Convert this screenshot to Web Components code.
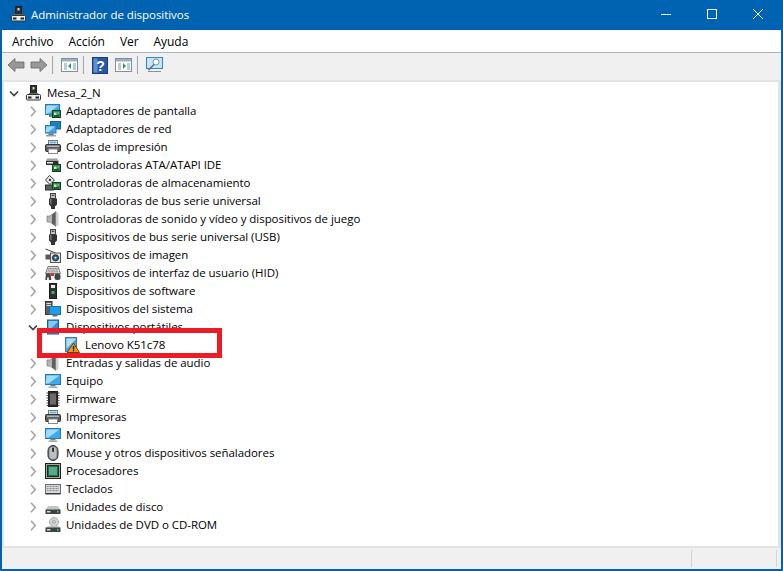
<!DOCTYPE html>
<html lang="es">
<head>
<meta charset="utf-8">
<title>Administrador de dispositivos</title>
<style>
  html, body { margin: 0; padding: 0; height: 100%; overflow: hidden; background: #fff; }
  body { font: 11.5px "Open Sans", "Noto Sans", sans-serif; letter-spacing: -0.05px; color: #000; }
</style>
</head>
<body>
<dm-window>
  <dm-titlebar slot="title" title-text="Administrador de dispositivos"></dm-titlebar>
  <dm-menubar slot="menu">
    <span>Archivo</span><span>Acción</span><span>Ver</span><span>Ayuda</span>
  </dm-menubar>
  <dm-toolbar slot="tools"></dm-toolbar>
  <dm-tree slot="tree">
    <dm-node level="0" open icon="root" label="Mesa_2_N"></dm-node>
    <dm-node icon="display" label="Adaptadores de pantalla"></dm-node>
    <dm-node icon="network" label="Adaptadores de red"></dm-node>
    <dm-node icon="printer" label="Colas de impresión"></dm-node>
    <dm-node icon="ata" label="Controladoras ATA/ATAPI IDE"></dm-node>
    <dm-node icon="storage" label="Controladoras de almacenamiento"></dm-node>
    <dm-node icon="usb" label="Controladoras de bus serie universal"></dm-node>
    <dm-node icon="sound" label="Controladoras de sonido y vídeo y dispositivos de juego"></dm-node>
    <dm-node icon="usb" label="Dispositivos de bus serie universal (USB)"></dm-node>
    <dm-node icon="camera" label="Dispositivos de imagen"></dm-node>
    <dm-node icon="hid" label="Dispositivos de interfaz de usuario (HID)"></dm-node>
    <dm-node icon="software" label="Dispositivos de software"></dm-node>
    <dm-node icon="system" label="Dispositivos del sistema"></dm-node>
    <dm-node open icon="portable" label="Dispositivos portátiles"></dm-node>
    <dm-node level="2" icon="warning" label="Lenovo K51c78"></dm-node>
    <dm-node icon="sound" label="Entradas y salidas de audio"></dm-node>
    <dm-node icon="monitor" label="Equipo"></dm-node>
    <dm-node icon="firmware" label="Firmware"></dm-node>
    <dm-node icon="printer" label="Impresoras"></dm-node>
    <dm-node icon="monitor" label="Monitores"></dm-node>
    <dm-node icon="mouse" label="Mouse y otros dispositivos señaladores"></dm-node>
    <dm-node icon="cpu" label="Procesadores"></dm-node>
    <dm-node icon="keyboard" label="Teclados"></dm-node>
    <dm-node icon="disk" label="Unidades de disco"></dm-node>
    <dm-node icon="dvd" label="Unidades de DVD o CD-ROM"></dm-node>
    <dm-highlight></dm-highlight>
  </dm-tree>
  <dm-statusbar slot="status"></dm-statusbar>
</dm-window>

<script>
const board = '<rect x="7.5" y="7.5" width="8" height="7" fill="#2f8a55" stroke="#123d26"/><path d="M9 9.500h2.500v2.500H9zM12.500 9.500H14v1h-1.500z" fill="#c7e8b8"/><path d="M9 13h5" stroke="#0f2f1d"/>'
const screen = (x, y, w, h) => `<rect x="${x}" y="${y}" width="${w}" height="${h}" fill="#3fa9ec" stroke="#2b76b0"/><path d="M${x + 1} ${y + 1}h${w - 2}l-${w - 4} ${h - 2}h-3z" fill="#9fdcfb"/>`

const ICONS = {
  root: '<rect x="4.500" y="0.500" width="6" height="8" fill="#2e2e2e" stroke="#222"/><rect x="6.500" y="2" width="2" height="2.500" fill="#d8d8d8"/><path d="M3 8h9l1 2H2z" fill="#666"/><rect x="0.500" y="9.500" width="14" height="5.500" rx="1" fill="#ececec" stroke="#333"/><rect x="2" y="11.500" width="3.500" height="2" fill="#222"/><rect x="9.500" y="11.500" width="3.500" height="2" fill="#222"/>',
  display: screen(0.5, 1.5, 14, 10) + '<rect x="4" y="12" width="5" height="2" fill="#7c7c7c"/>' + board,
  network: '<rect x="5.500" y="0.500" width="10" height="7.500" fill="#1f7fc4" stroke="#205f90"/>' + screen(0.5, 4.5, 10.5, 7.5) + '<rect x="3.500" y="12.500" width="5" height="1.500" fill="#6d6d6d"/><rect x="1" y="14" width="10" height="1.500" fill="#9d9d9d"/>',
  printer: '<rect x="3.500" y="1.500" width="9" height="4" fill="#fff" stroke="#777"/><rect x="4.500" y="2.500" width="7" height="2" fill="#63b0e2"/><rect x="0.500" y="5.500" width="15" height="7" rx="1" fill="#5d5d5d" stroke="#333"/><rect x="2" y="6.500" width="12" height="1.500" fill="#b3b3b3"/><rect x="3.500" y="10" width="9" height="4.500" fill="#fff" stroke="#888"/>',
  ata: '<path d="M2 1.500h10l2 3v3H1V4z" fill="#a0a0a0"/><rect x="1" y="4" width="12" height="4" fill="#2e2e2e"/><rect x="2" y="5" width="6" height="1.500" fill="#efefef"/>' + board,
  storage: '<path d="M4.500 0.500l5 4.500-4.500 4.500L0.500 5z" fill="#eee" stroke="#333"/><circle cx="5" cy="5" r="1.300" fill="#444"/><rect x="0.500" y="10" width="8" height="5" fill="#5d5d5d" stroke="#2e2e2e"/>' + board,
  usb: '<rect x="5.500" y="0.500" width="5" height="5" fill="#c4c4c4" stroke="#444"/><rect x="6.800" y="1.700" width="1" height="1.300" fill="#222"/><rect x="8.300" y="1.700" width="1" height="1.300" fill="#222"/><path d="M4 5.500h8v6l-2 2v2.500H6v-2.500l-2-2z" fill="#333"/><rect x="5.200" y="6" width="1.300" height="5" fill="#808080"/>',
  sound: '<path d="M2 5h3l6-4.500v15L5 11H2z" fill="#b5b5b5" stroke="#767676" stroke-width=".7"/><path d="M7 3.500v9l3.500 2.300V1.200z" fill="#5f5f5f"/><rect x="12" y="1.500" width="1.500" height="13" fill="#d2d2d2"/>',
  camera: '<path d="M0.500 2l10 4" stroke="#444" fill="none"/><rect x="0.500" y="7.500" width="6" height="5" fill="#5a5a5a"/><rect x="5.500" y="6" width="10" height="9.500" fill="#e2e2e2" stroke="#555"/><circle cx="10.500" cy="10.800" r="3" fill="#2f688f" stroke="#222"/><circle cx="10.500" cy="10.800" r="1" fill="#c6e9fa"/>',
  hid: '<path d="M3 1.500h10l2.500 7H.5z" fill="#dcdcdc" stroke="#5f5f5f" stroke-width=".8"/><path d="M3.500 3.500h9M3 5h10M2.500 6.800h11" stroke="#777" stroke-dasharray="1 .6"/><path d="M1 8.500h4.500l.8 6.500H4l-.5-3h-1L2 15H.3z" fill="#454545"/><rect x="6" y="8" width="3" height="3" fill="#cc2f2f"/><rect x="9.500" y="8.500" width="6" height="6.500" rx="2.500" fill="#454545"/>',
  software: '<rect x="4.500" y="0.500" width="7" height="15" fill="#2f2f2f" stroke="#1c1c1c"/><rect x="6" y="2" width="4" height="3" fill="#ececec"/><rect x="6.500" y="8" width="3" height="3" fill="#3cb46a"/>',
  system: '<rect x="0.500" y="0.500" width="6.500" height="13" fill="#5f5f5f" stroke="#333"/><rect x="1.500" y="2" width="4.500" height="1" fill="#e0e0e0"/><rect x="1.500" y="4" width="4.500" height="1" fill="#e0e0e0"/><rect x="4.500" y="5.500" width="11" height="8" fill="#1c9fe6" stroke="#1f6fa8"/><rect x="7.500" y="13.500" width="5" height="2" fill="#6f6f6f"/>',
  portable: '<rect x="2.500" y="1" width="11" height="14" fill="#2f8fdc" stroke="#1f5f94"/><path d="M3.500 2h9v1l-9 9z" fill="#84cbf3"/>',
  warning: '<rect x="1.500" y="0.500" width="11" height="14" fill="#4aa7e8" stroke="#4f7490"/><path d="M2.500 1.500h9v1l-9 9z" fill="#b5e0f9"/><path d="M9.500 6l6 9.500H3z" fill="#f09a1c" stroke="#6b3f0a" stroke-linejoin="round"/><rect x="8.900" y="9" width="1.300" height="3.500" fill="#111"/><rect x="8.900" y="13" width="1.300" height="1.300" fill="#111"/>',
  monitor: screen(0.5, 1.5, 15, 10) + '<rect x="5.500" y="12" width="5" height="1.500" fill="#7f7f7f"/><rect x="3.500" y="13.500" width="9" height="1.500" fill="#aaa"/>',
  firmware: '<rect x="3.500" y="0.500" width="9" height="15" fill="#2b2b2b" stroke="#1a1a1a"/><path d="M1.500 2h2M1.500 4.500h2M1.500 7h2M1.500 9.500h2M1.500 12h2M1.500 14.500h2M12.500 2h2M12.500 4.500h2M12.500 7h2M12.500 9.500h2M12.500 12h2M12.500 14.500h2" stroke="#555"/><rect x="5" y="2.500" width="6" height="11" fill="#6b6b6b"/>',
  mouse: '<rect x="3" y="0.500" width="10" height="15" rx="5" fill="#7e8388" stroke="#2c2c2c"/><rect x="4.500" y="2" width="7" height="12" rx="3.500" fill="#bcc0c4"/><rect x="7.200" y="2.500" width="1.700" height="4.500" rx=".8" fill="#1c1c1c"/>',
  cpu: '<rect x="0.500" y="0.500" width="15" height="15" fill="#b9a86f" stroke="#222"/><rect x="2.500" y="2.500" width="11" height="11" fill="#16705a" stroke="#102e3d"/><rect x="4" y="4" width="8" height="8" fill="#5aa888"/>',
  keyboard: '<rect x="0.500" y="3.500" width="15" height="9" fill="#d6d8da" stroke="#6d6d6d"/><path d="M2 5.500h12M2 7.500h12M2 9.500h12" stroke="#85888b" stroke-dasharray="1 .5"/><rect x="0.500" y="12" width="15" height="1.500" fill="#3b3b3b"/>',
  disk: '<path d="M3 7h10l2.500 4H.5z" fill="#c2c4c6"/><rect x="0.500" y="10.500" width="15" height="4.500" fill="#404144"/><rect x="2" y="12" width="3.500" height="1.500" fill="#dcdcdc"/><rect x="12" y="12" width="1.500" height="1.500" fill="#55d864"/>',
  dvd: '<circle cx="9" cy="5" r="4.500" fill="#d3d5d7" stroke="#8f8f8f" stroke-width=".7"/><circle cx="9" cy="5" r="1.300" fill="#fff" stroke="#777" stroke-width=".7"/><path d="M3 9h10l2.500 2H.5z" fill="#c2c4c6"/><rect x="0.500" y="10.500" width="15" height="4.500" fill="#404144"/><rect x="2" y="12" width="3.500" height="1.500" fill="#dcdcdc"/><rect x="12" y="12" width="1.500" height="1.500" fill="#55d864"/>'
}

class DmWindow extends HTMLElement {
  constructor () {
    super()
    this.attachShadow({ mode: 'open' }).innerHTML = `
      <style>
        :host {
          display: flex;
          flex-direction: column;
          box-sizing: border-box;
          width: 783px;
          height: 571px;
          border: solid #0063b1;
          border-width: 0 2px 2px 2px;
          background: #f0f0f0;
        }
        ::slotted([slot=tree]) { flex: 1; min-height: 0; }
      </style>
      <slot name="title"></slot>
      <slot name="menu"></slot>
      <slot name="tools"></slot>
      <slot name="tree"></slot>
      <slot name="status"></slot>`
  }
}

class DmTitlebar extends HTMLElement {
  constructor () {
    super()
    this.attachShadow({ mode: 'open' })
  }

  connectedCallback () {
    this.shadowRoot.innerHTML = `
      <style>
        :host {
          display: flex;
          align-items: center;
          height: 30px;
          margin: 0 -2px;
          padding-left: 11px;
          background: #0063b1;
          color: #fff;
          flex: none;
        }
        svg.app { width: 16px; height: 16px; margin: -2px 4px 0 0; flex: none; }
        .name { flex: 1; margin-top: -2px; }
        .btn { width: 46px; height: 28px; align-self: flex-start; display: flex; align-items: center; justify-content: center; }
        .btn svg { width: 12px; height: 12px; fill: none; stroke: #fff; stroke-width: 1; }
        .btn:last-child { margin-right: 2px; }
      </style>
      <svg class="app" viewBox="0 0 16 16">${ICONS.root}</svg>
      <span class="name">${this.getAttribute('title-text')}</span>
      <div class="btn"><svg viewBox="0 0 12 12"><path d="M1 6.500h10"/></svg></div>
      <div class="btn"><svg viewBox="0 0 12 12"><rect x="1.500" y="1.500" width="9" height="9"/></svg></div>
      <div class="btn"><svg viewBox="0 0 12 12"><path d="M1 1l10 10M11 1L1 11"/></svg></div>`
  }
}

class DmMenubar extends HTMLElement {
  constructor () {
    super()
    this.attachShadow({ mode: 'open' }).innerHTML = `
      <style>
        :host {
          display: flex;
          align-items: center;
          gap: 15px;
          height: 22px;
          padding-left: 10px;
          background: #fff;
          border-bottom: 1px solid #b4b4b4;
          font-size: 12px;
          flex: none;
        }
      </style>
      <slot></slot>`
  }
}

class DmToolbar extends HTMLElement {
  constructor () {
    super()
    const pane = (d) => `<svg viewBox="0 0 18 16"><rect x=".5" y="1.500" width="16" height="13" fill="#fff" stroke="#7f909c"/><rect x="1" y="2" width="15" height="2.500" fill="#9fb0bd"/><rect x="3" y="6" width="3" height="7" fill="#bfcbd3"/><rect x="12" y="6" width="3" height="7" fill="#bfcbd3"/><path d="${d}" fill="#2f9a58"/></svg>`
    this.attachShadow({ mode: 'open' }).innerHTML = `
      <style>
        :host {
          display: flex;
          align-items: center;
          box-sizing: border-box;
          height: 27px;
          padding: 0 0 3px 5px;
          background: #f0f0f0;
          flex: none;
        }
        svg { width: 18px; height: 16px; flex: none; }
        .sep { width: 1px; height: 18px; background: #a0a0a0; margin: 0 8px 0 4px; flex: none; }
      </style>
      <svg style="margin-right:5px" viewBox="0 0 18 16"><path d="M1 8l7-6.500v3.500h9v6H8v3.500z" fill="#989898" stroke="#666" stroke-width=".8"/></svg>
      <svg viewBox="0 0 18 16"><path d="M17 8l-7-6.500v3.500H1v6h9v3.500z" fill="#989898" stroke="#666" stroke-width=".8"/></svg>
      <div class="sep"></div>
      ${pane('M10 6v6L7 9z')}
      <div class="sep"></div>
      <svg style="width:16px;height:17px;margin-right:7px" viewBox="0 0 16 17"><rect x=".5" y="0.500" width="15" height="16" fill="#2758a8" stroke="#1b3f7c"/><rect x="1.500" y="1.500" width="4" height="14" fill="#5f8fd6"/><text x="8.500" y="14" font-size="14" font-weight="700" font-family="Liberation Sans" text-anchor="middle" fill="#fff">?</text></svg>
      ${pane('M8 6v6l3-3z')}
      <div class="sep"></div>
      <svg viewBox="0 0 18 16"><rect x=".5" y="0.500" width="16" height="11" fill="#c5e6f9" stroke="#2f87c0"/><circle cx="10" cy="5" r="3" fill="#fff" stroke="#7f909c"/><path d="M8 7.500L2.500 13" stroke="#666" stroke-width="1.500"/><path d="M2 14.500h13" stroke="#8f8f8f"/></svg>`
  }
}

class DmTree extends HTMLElement {
  constructor () {
    super()
    this.attachShadow({ mode: 'open' }).innerHTML = `
      <style>
        :host {
          display: block;
          position: relative;
          background: #fff;
          border: 2px solid #e3e3e3;
          border-right-width: 3px;
          padding-top: 1px;
          overflow: hidden;
        }
      </style>
      <slot></slot>`
  }
}

class DmNode extends HTMLElement {
  constructor () {
    super()
    this.attachShadow({ mode: 'open' })
  }

  connectedCallback () {
    const level = Number(this.getAttribute('level') || 1)
    const open = this.hasAttribute('open')
    // hoja del arbol sin flecha: solo el dispositivo hijo
    const chevron = level === 2
      ? ''
      : open
        ? '<path d="M1 3.500l4 4 4-4" stroke="#3f3f3f"/>'
        : '<path d="M3 .8l4.200 4.700L3 10.200" stroke="#a6a6a6"/>'
    this.shadowRoot.innerHTML = `
      <style>
        :host {
          display: flex;
          align-items: center;
          height: 18px;
          padding-left: ${[5, 24, 50][level]}px;
          white-space: nowrap;
        }
        .arrow { width: 10px; height: 11px; margin-top: 3px; flex: none; fill: none; stroke-width: 1.600; }
        .icon { width: 16px; height: 16px; margin: 2px 5px 0 ${level === 2 ? 0 : 7}px; flex: none; }
        span { margin-top: 1px; }
      </style>
      <svg class="arrow" viewBox="0 0 10 11">${chevron}</svg>
      <svg class="icon" viewBox="0 0 16 16">${ICONS[this.getAttribute('icon')]}</svg>
      <span>${this.getAttribute('label')}</span>`
  }
}

class DmHighlight extends HTMLElement {
  constructor () {
    super()
    this.attachShadow({ mode: 'open' }).innerHTML = `
      <style>
        :host {
          position: absolute;
          left: 33px;
          top: 246px;
          width: 175px;
          height: 20px;
          border: 5px solid #ed1c24;
        }
      </style>`
  }
}

class DmStatusbar extends HTMLElement {
  constructor () {
    super()
    this.attachShadow({ mode: 'open' }).innerHTML = `
      <style>
        :host {
          display: flex;
          justify-content: flex-end;
          height: 21px;
          background: #f0f0f0;
          flex: none;
        }
        div { width: 84px; border-left: 1px solid #d4d4d4; margin: 2px 0; }
        div:last-child { width: 1px; margin-right: 3px; }
      </style>
      <div></div><div></div>`
  }
}

customElements.define('dm-window', DmWindow)
customElements.define('dm-titlebar', DmTitlebar)
customElements.define('dm-menubar', DmMenubar)
customElements.define('dm-toolbar', DmToolbar)
customElements.define('dm-tree', DmTree)
customElements.define('dm-node', DmNode)
customElements.define('dm-highlight', DmHighlight)
customElements.define('dm-statusbar', DmStatusbar)
</script>
</body>
</html>
